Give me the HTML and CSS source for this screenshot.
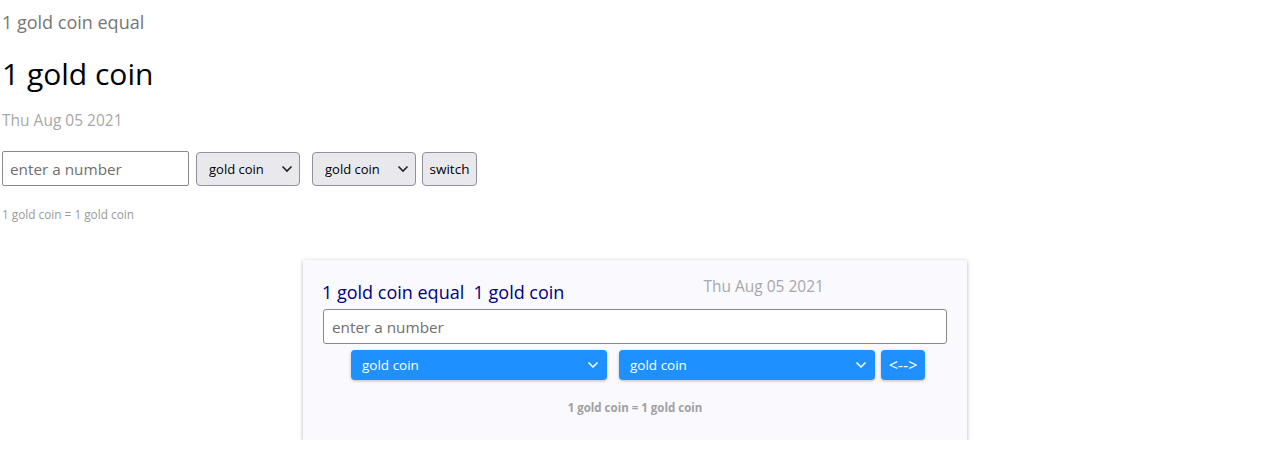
FILE: index.html
```html
<!DOCTYPE html>
<html lang="en">
<head>
<meta charset="utf-8">
<title>gold coin converter</title>
<link rel="stylesheet" href="styles.css">
</head>
<body>
<section class="plain">
  <p class="plain-sub">1 gold coin equal</p>
  <h1 class="plain-head">1 gold coin</h1>
  <p class="plain-date">Thu Aug 05 2021</p>
  <div class="plain-controls">
    <input class="plain-input" type="text" placeholder="enter a number">
    <span class="sel-wrap plain-sel first">
      <select class="plain-select"><option>gold coin</option></select>
      <svg class="chev" width="12" height="8" viewBox="0 0 12 8"><path d="M1.5 1.5 L6 6 L10.5 1.5" fill="none" stroke="#222" stroke-width="1.6"/></svg>
    </span>
    <span class="sel-wrap plain-sel second">
      <select class="plain-select"><option>gold coin</option></select>
      <svg class="chev" width="12" height="8" viewBox="0 0 12 8"><path d="M1.5 1.5 L6 6 L10.5 1.5" fill="none" stroke="#222" stroke-width="1.6"/></svg>
    </span>
    <button class="plain-btn" type="button">switch</button>
  </div>
  <p class="plain-result">1 gold coin = 1 gold coin</p>
</section>

<section class="card">
  <div class="card-top">
    <p class="card-title">1 gold coin equal&nbsp; 1 gold coin</p>
    <p class="card-date">Thu Aug 05 2021</p>
  </div>
  <input class="card-input" type="text" placeholder="enter a number">
  <div class="card-row">
    <span class="sel-wrap card-sel">
      <select class="card-select"><option>gold coin</option></select>
      <svg class="chev" width="12" height="8" viewBox="0 0 12 8"><path d="M1.5 1.5 L6 6 L10.5 1.5" fill="none" stroke="#fff" stroke-width="1.5"/></svg>
    </span>
    <span class="sel-wrap card-sel">
      <select class="card-select"><option>gold coin</option></select>
      <svg class="chev" width="12" height="8" viewBox="0 0 12 8"><path d="M1.5 1.5 L6 6 L10.5 1.5" fill="none" stroke="#fff" stroke-width="1.5"/></svg>
    </span>
    <button class="card-btn" type="button">&lt;--&gt;</button>
  </div>
  <p class="card-result">1 gold coin = 1 gold coin</p>
</section>
</body>
</html>
```

FILE: styles.css
```css
* { box-sizing: border-box; }
html, body { margin: 0; padding: 0; background: #fff; }
body {
  font-family: "Open Sans", "Noto Sans", sans-serif;
  color: #000;
}
p, h1 { margin: 0; }

.plain { padding: 0 0 0 2px; }
.plain-sub {
  font-size: 18px;
  color: #767676;
  line-height: 24px;
  padding-top: 10px;
}
.plain-head {
  font-weight: 400;
  font-size: 30px;
  line-height: 40px;
  margin-top: 20px;
}
.plain-date {
  font-size: 15.5px;
  color: #a8a8a8;
  line-height: 20px;
  margin-top: 16px;
}
.plain-controls {
  display: flex;
  align-items: center;
  margin-top: 21px;
  height: 35px;
}
.plain-input {
  width: 187px;
  height: 35px;
  border: 1px solid #8a8a8a;
  border-radius: 2px;
  padding: 0 7px;
  font-family: inherit;
  font-size: 15.3px;
  color: #000;
}
.plain-input::placeholder { color: #6f6f6f; }
.sel-wrap { position: relative; display: flex; }
.chev { position: absolute; top: 50%; margin-top: -4px; pointer-events: none; }
.plain-sel { margin-left: 7px; }
.plain-sel.second { margin-left: 12px; }
.plain-sel .chev { right: 7px; }
.plain-select {
  -webkit-appearance: none;
  appearance: none;
  width: 104px;
  height: 34px;
  background: #e9e9ed;
  border: 1px solid #8f8f9d;
  border-radius: 4px;
  padding: 0 0 0 12px;
  font-family: inherit;
  font-size: 13px;
  color: #000;
}
.plain-btn {
  margin-left: 6px;
  width: 55px;
  height: 34px;
  background: #e9e9ed;
  border: 1px solid #8f8f9d;
  border-radius: 4px;
  padding: 0;
  font-family: inherit;
  font-size: 13.5px;
  color: #000;
}
.plain-result {
  font-size: 11.8px;
  color: #9a9a9a;
  margin-top: 20px;
  line-height: 16px;
}

.card {
  width: 664px;
  height: 180px;
  margin: 38px 0 0 303px;
  background: #f9f9fe;
  box-shadow: 0 1px 4px rgba(0, 0, 0, 0.3);
  padding: 16px 20px 0 20px;
}
.card-top {
  display: flex;
  align-items: flex-start;
}
.card-title {
  font-size: 18px;
  color: #000080;
  line-height: 28px;
  padding-top: 2px;
  margin-left: -1px;
}
.card-date {
  font-size: 15.5px;
  color: #a8a8a8;
  line-height: 20px;
  margin-left: 139px;
}
.card-input {
  display: block;
  width: 100%;
  height: 35px;
  margin-top: 3px;
  border: 1px solid #8a8a8a;
  border-radius: 3px;
  background: #fff;
  padding: 0 8px;
  font-family: inherit;
  font-size: 15.3px;
}
.card-input::placeholder { color: #6f6f6f; }
.card-row {
  display: flex;
  padding-left: 28px;
  margin-top: 6px;
  height: 30px;
}
.card-sel { margin-right: 12px; }
.card-sel + .card-sel { margin-right: 6px; }
.card-sel .chev { right: 8px; }
.card-select {
  -webkit-appearance: none;
  appearance: none;
  width: 256px;
  height: 30px;
  background: #1e90ff;
  border: none;
  border-radius: 4px;
  box-shadow: 0 1px 3px rgba(0, 0, 0, 0.25);
  color: #fff;
  font-family: inherit;
  font-size: 13.5px;
  padding: 0 0 0 11px;
}
.card-btn {
  width: 44px;
  height: 30px;
  background: #1e90ff;
  border: none;
  border-radius: 4px;
  box-shadow: 0 1px 3px rgba(0, 0, 0, 0.25);
  color: #fff;
  font-family: inherit;
  font-size: 16px;
  padding: 0;
}
.card-result {
  text-align: center;
  font-size: 11.5px;
  font-weight: 700;
  color: #a0a0a0;
  margin-top: 20px;
  line-height: 16px;
}
```
